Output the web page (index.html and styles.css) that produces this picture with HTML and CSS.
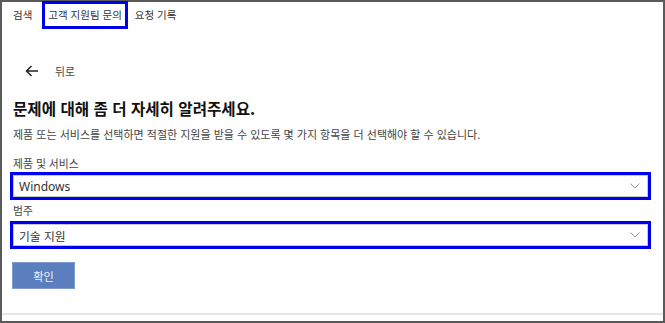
FILE: index.html
```html
<!DOCTYPE html>
<html lang="ko">
<head>
<meta charset="utf-8">
<link rel="stylesheet" href="styles.css">
</head>
<body>
<div class="frame">
  <nav class="tabs">
    <span class="tab first">검색</span>
    <span class="tab active">고객 지원팀 문의</span>
    <span class="tab">요청 기록</span>
  </nav>
  <main class="content">
    <div class="back">
      <svg class="arrow" width="14" height="12" viewBox="0 0 14 12"><path d="M13 6H1.5M6.5 1L1.5 6l5 5" fill="none" stroke="#222" stroke-width="1.5"/></svg>
      <span class="back-text">뒤로</span>
    </div>
    <h1 class="title">문제에 대해 좀 더 자세히 알려주세요.</h1>
    <p class="sub">제품 또는 서비스를 선택하면 적절한 지원을 받을 수 있도록 몇 가지 항목을 더 선택해야 할 수 있습니다.</p>
    <div class="label label-first">제품 및 서비스</div>
    <div class="select"><span>Windows</span><svg class="chev" width="10" height="6" viewBox="0 0 10 6"><path d="M0.5 0.5L5 5l4.5-4.5" fill="none" stroke="#999" stroke-width="1"/></svg></div>
    <div class="label label-second">범주</div>
    <div class="select"><span class="kr">기술 지원</span><svg class="chev" width="10" height="6" viewBox="0 0 10 6"><path d="M0.5 0.5L5 5l4.5-4.5" fill="none" stroke="#999" stroke-width="1"/></svg></div>
    <button class="btn">확인</button>
  </main>
  <footer class="foot"></footer>
</div>
</body>
</html>
```
FILE: styles.css
```css
* { box-sizing: border-box; }
html, body { margin: 0; padding: 0; background: #fff; }
body { font-family: "Noto Sans CJK KR", "Noto Sans", sans-serif; color: #333; }
.frame {
  width: 665px; height: 323px;
  border: 2px solid #5a5a5a;
  display: flex; flex-direction: column;
}
.tabs { display: flex; height: 27px; align-items: stretch; padding-left: 8px; }
.tab { font-size: 10.5px; line-height: 25px; padding: 0 3px; margin-right: 4px; color: #333; }
.tab.first { margin-right: 7px; }
.tab.active { border: 3px solid #0000f0; padding: 0 3px; line-height: 21px; margin-top: -1px; height: 28px; }
.content { padding: 0 12px 0 10px; display: flex; flex-direction: column; align-items: flex-start; }
.back { display: flex; align-items: center; height: 24px; margin-top: 30px; padding-left: 13px; }
.arrow { display: block; }
.back-text { font-size: 10.8px; margin-left: 16px; color: #444; }
.title { font-size: 15.6px; font-weight: 700; line-height: 20px; margin: 15px 0 0 1px; color: #111; }
.sub { font-size: 11px; line-height: 16px; margin: 8px 0 0 1px; color: #444; }
.label { font-size: 10.8px; line-height: 16px; margin-left: 1px; color: #444; }
.label-first { margin-top: 13px; }
.label-second { margin-top: 2px; }
.select {
  align-self: stretch; margin: 1px 0 0 -2px;
  height: 28px; border: 3px solid #0000f0;
  box-shadow: inset 0 0 0 1px #c8c8c8;
  display: flex; align-items: center; justify-content: space-between;
  padding: 0 8px 0 6px; font-size: 12px; color: #333;
  font-family: "Noto Sans", "Noto Sans CJK KR", sans-serif;
}
.select .kr { font-family: "Noto Sans CJK KR", sans-serif; font-size: 11.8px; }
.label-second + .select { margin-top: 3px; }
.chev { display: block; }
.btn {
  margin-top: 13px; width: 63px; height: 27px;
  background: #5b7fbe; border: 1px solid #7c9bd0; color: #eef2fa;
  font-family: inherit; font-size: 11.2px; padding: 0;
}
.foot { margin-top: auto; height: 8px; border-top: 2px solid #e6e6e6; }
```
